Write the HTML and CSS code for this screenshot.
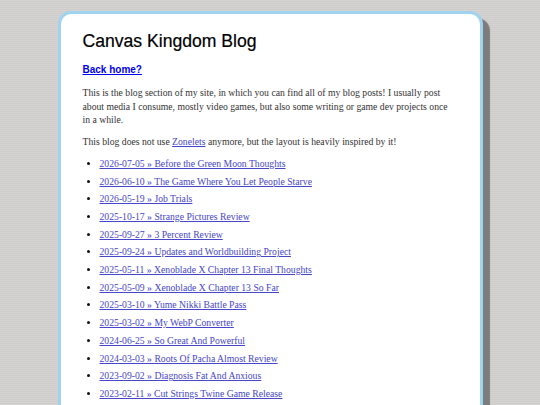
FILE: index.html
```html
<!DOCTYPE html>
<html lang="en">
<head>
<meta charset="utf-8">
<title>Canvas Kingdom Blog</title>
<link rel="stylesheet" href="styles.css">
</head>
<body>
<main class="card">
  <h1 class="title">Canvas Kingdom Blog</h1>
  <p class="back"><a href="#">Back home?</a></p>
  <p class="text">This is the blog section of my site, in which you can find all of my blog posts! I usually post about media I consume, mostly video games, but also some writing or game dev projects once in a while.</p>
  <p class="text">This blog does not use <a class="post" href="#">Zonelets</a> anymore, but the layout is heavily inspired by it!</p>
  <ul class="posts">
    <li><a class="post" href="#">2026-07-05 » Before the Green Moon Thoughts</a></li>
    <li><a class="post" href="#">2026-06-10 » The Game Where You Let People Starve</a></li>
    <li><a class="post" href="#">2026-05-19 » Job Trials</a></li>
    <li><a class="post" href="#">2025-10-17 » Strange Pictures Review</a></li>
    <li><a class="post" href="#">2025-09-27 » 3 Percent Review</a></li>
    <li><a class="post" href="#">2025-09-24 » Updates and Worldbuilding Project</a></li>
    <li><a class="post" href="#">2025-05-11 » Xenoblade X Chapter 13 Final Thoughts</a></li>
    <li><a class="post" href="#">2025-05-09 » Xenoblade X Chapter 13 So Far</a></li>
    <li><a class="post" href="#">2025-03-10 » Yume Nikki Battle Pass</a></li>
    <li><a class="post" href="#">2025-03-02 » My WebP Converter</a></li>
    <li><a class="post" href="#">2024-06-25 » So Great And Powerful</a></li>
    <li><a class="post" href="#">2024-03-03 » Roots Of Pacha Almost Review</a></li>
    <li><a class="post" href="#">2023-09-02 » Diagnosis Fat And Anxious</a></li>
    <li><a class="post" href="#">2023-02-11 » Cut Strings Twine Game Release</a></li>
  </ul>
</main>
</body>
</html>
```

FILE: styles.css
```css
html, body {
  margin: 0;
  padding: 0;
}
body {
  background-color: #d3d1cf;
  background-image: repeating-linear-gradient(to bottom, #d5d3d1 0, #d5d3d1 1px, #cfcdcb 1px, #cfcdcb 2px);
  font-family: "Liberation Serif", serif;
  color: #333;
  padding-top: 11px;
  height: 405px;
  overflow: hidden;
  box-sizing: border-box;
}
.card {
  width: 425px;
  box-sizing: border-box;
  margin: 0 auto;
  background: #fff;
  border: 3px solid #9fd3ef;
  border-radius: 13px 13px 0 0;
  box-shadow: 7px 7px 1px #7c7c7c;
  padding: 16px 22px 40px 22px;
  min-height: 420px;
}
.title {
  font-family: "Liberation Sans", sans-serif;
  font-weight: normal;
  font-size: 17.6px;
  color: #000;
  margin: 0 0 11px 0;
  line-height: 22px;
  -webkit-text-stroke: 0.2px #000;
}
.back {
  margin: 0 0 9px 0;
  font-family: "Liberation Sans", sans-serif;
  font-size: 10px;
  font-weight: bold;
  line-height: 14px;
}
.back a { color: #0000ee; }
.text {
  font-size: 9.7px;
  line-height: 13.7px;
  margin: 0 0 8px 0;
  color: #333;
}
.post { color: #4646c8; }
.posts {
  margin: 0;
  padding-left: 17px;
  font-size: 9.7px;
  line-height: 13.7px;
}
.posts li {
  color: #111;
  margin-bottom: 4px;
}
```
